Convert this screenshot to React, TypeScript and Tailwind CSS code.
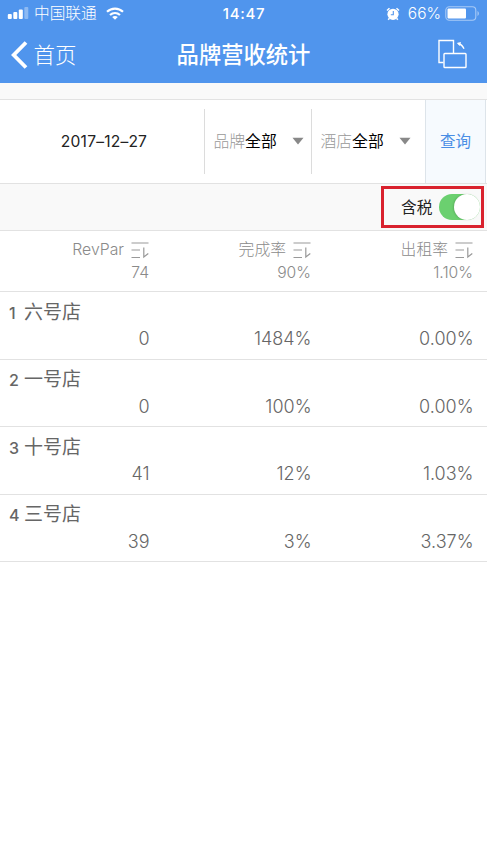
import { ReactNode } from 'react'

const stores = [
    { name: '六号店', revPar: '0', completion: '1484%', occupancy: '0.00%' },
    { name: '一号店', revPar: '0', completion: '100%', occupancy: '0.00%' },
    { name: '十号店', revPar: '41', completion: '12%', occupancy: '1.03%' },
    { name: '三号店', revPar: '39', completion: '3%', occupancy: '3.37%' },
]

function SortIcon() {
    return (
        <svg width="18" height="17" viewBox="0 0 18 17" fill="none" stroke="#999" strokeWidth="1.2">
            <path d="M0.5 1H17.5M0.5 8H9M0.5 15.5H9M12.8 5.5V15L17.3 11.5" />
        </svg>
    )
}

function StatusBar() {
    return (
        <div className="flex h-[27px] items-center pl-[7px] pr-[7px] text-white">
            <div className="flex flex-1 items-center">
                <svg width="22" height="12" viewBox="0 0 22 12" fill="#fff">
                    <rect x="0.8" y="7" width="4" height="5" rx="1" />
                    <rect x="6.3" y="5" width="4" height="7" rx="1" />
                    <rect x="11.8" y="2.5" width="4" height="9.5" rx="1" />
                    <rect x="17.3" y="0" width="4" height="12" rx="1" opacity="0.35" />
                </svg>
                <span className="ml-[5px] pt-px text-[15.7px] leading-none font-light">中国联通</span>
                <svg className="ml-[9px]" width="18" height="13" viewBox="0 0 18 13" fill="none" stroke="#fff" strokeWidth="2.2">
                    <path d="M1 4.8C5.5 0.5 12.5 0.5 17 4.8" />
                    <path d="M4 8C7 5.3 11 5.3 14 8" />
                    <path d="M9 12.8L6.2 10C7.8 8.5 10.2 8.5 11.8 10Z" fill="#fff" stroke="none" />
                </svg>
            </div>
            <span className="w-11 pl-px text-center text-[15px] leading-none font-medium tracking-[0.7px] whitespace-nowrap">14:47</span>
            <div className="flex flex-1 items-center justify-end">
                <svg width="14" height="14" viewBox="0 0 14 14">
                    <circle cx="7" cy="7.3" r="5.6" fill="#fff" />
                    <path d="M1 3.5L3.5 1.2M13 3.5L10.5 1.2M3.2 11.5L2.2 12.8M10.8 11.5L11.8 12.8" stroke="#fff" strokeWidth="1.5" />
                    <path d="M7.3 4V7.8H4.8" stroke="#5095ed" strokeWidth="1.1" fill="none" />
                </svg>
                <span className="ml-2 text-[15.5px] leading-none font-light">66%</span>
                <svg className="ml-[4px]" width="35" height="15" viewBox="0 0 35 15">
                    <rect x="0.8" y="0.8" width="30" height="13.4" rx="3.5" fill="none" stroke="#fff" strokeOpacity="0.5" strokeWidth="1.1" />
                    <rect x="2.5" y="2.5" width="18.5" height="10" rx="1" fill="#fff" />
                    <path d="M32.5 5V10C34.3 9.2 34.3 5.8 32.5 5Z" fill="#fff" opacity="0.5" />
                </svg>
            </div>
        </div>
    )
}

function Filter({ label, className }: { label: string; className: string }) {
    return (
        <div className={`flex h-[65px] items-center self-center border-l border-[#dcdcdc] pl-[8.5px] text-[15.8px] ${className}`}>
            <span className="font-light text-[#999]">{label}</span>
            <span className="text-black">全部</span>
            <svg className="mb-px ml-auto" width="12" height="8" viewBox="0 0 12 8" fill="#888">
                <path d="M0.5 0.7H11.5L6 7.5Z" />
            </svg>
        </div>
    )
}

function HeadCell({ title, value }: { title: ReactNode; value: string }) {
    return (
        <div className="text-right text-[#8a8a8a]">
            <div className="flex h-6 items-center justify-end gap-[7px] text-[15.8px] leading-6">
                <span className="font-light whitespace-nowrap">{title}</span>
                <SortIcon />
            </div>
            <div className="text-[15.7px] leading-[22px] font-light">{value}</div>
        </div>
    )
}

export default function App() {
    return (
        <div className="h-[866px] w-[487px] overflow-hidden bg-white font-['Inter','Noto_Sans_CJK_SC',sans-serif]">
            <header className="h-[83px] bg-[#5095ed] text-white">
                <StatusBar />
                <div className="flex h-14 items-center pr-5 pl-[11px]">
                    <div className="flex flex-1 items-center">
                        <svg width="17" height="28" viewBox="0 0 17 28" fill="none" stroke="#fff" strokeWidth="3.8">
                            <path d="M15 1.5L2.7 14L15 26.5" />
                        </svg>
                        <span className="ml-[5.5px] pt-px text-[21.5px] leading-none font-light">首页</span>
                    </div>
                    <h1 className="pl-[9px] text-[22.3px] leading-none font-medium">品牌营收统计</h1>
                    <div className="flex flex-1 justify-end">
                        <svg className="mb-[2px]" width="29" height="30" viewBox="0 0 29 30" fill="none" stroke="#fff" strokeWidth="1.4">
                            <path d="M5.5 23.5H1V1.5H15.5V14.5" />
                            <rect x="6" y="14.5" width="22" height="14" rx="0.8" />
                            <path d="M26 9.8C24.8 7 23 5.3 20.3 4.5" />
                            <path d="M18.8 4L23 3L21.8 7Z" fill="#fff" stroke="none" />
                        </svg>
                    </div>
                </div>
            </header>

            <div className="h-4 bg-[#f9f9f9]" />
            <div className="flex h-[85px] border-y border-[#e2e2e2]">
                <div className="w-[204px] self-center pt-px pl-1 text-center text-[15.6px] tracking-[0.2px] text-[#222]">2017–12–27</div>
                <Filter label="品牌" className="w-[107px] pr-[7px]" />
                <Filter label="酒店" className="w-[114px] pr-[14px]" />
                <button type="button" className="w-[61px] border-x border-[#dde4ea] bg-[#f6fafe] text-[15.5px] text-[#4a8ee5]">查询</button>
            </div>

            {/* tax switch */}
            <div className="flex h-[47px] items-center justify-end border-b border-[#e2e2e2] bg-[#f9f9f9] pr-[3px]">
                <div className="flex h-[42px] w-[103px] items-center border-[3px] border-[#d9222e] pl-[17px]">
                    <span className="pt-px text-[15.7px] text-[#222]">含税</span>
                    <div className="ml-[7px] flex h-[26px] w-[41px] shrink-0 justify-end rounded-full bg-[#6bd06f]">
                        <div className="size-[26px] rounded-full bg-white shadow-[-1px_0_2px_rgba(0,0,0,0.15)]" />
                    </div>
                </div>
            </div>

            <div className="grid h-[61px] grid-cols-[149px_162px_162px] border-b border-[#e2e2e2] pt-[7px]">
                <HeadCell title="RevPar" value="74" />
                <HeadCell title="完成率" value="90%" />
                <HeadCell title="出租率" value="1.10%" />
            </div>

            {stores.map((store, i) => (
                <div key={store.name} className="h-[67.5px] border-b border-[#e2e2e2] text-[#666]">
                    <div className="flex h-[33px] items-baseline pt-[6.5px] pl-[9px] leading-[28px]">
                        <span className="w-[15px] text-[16px] font-medium">{i + 1}</span>
                        <span className="text-[19px]">{store.name}</span>
                    </div>
                    <div className="grid grid-cols-[149.5px_162px_162px] text-right text-[18px] leading-[28px] font-light">
                        <span>{store.revPar}</span>
                        <span>{store.completion}</span>
                        <span>{store.occupancy}</span>
                    </div>
                </div>
            ))}
        </div>
    )
}
